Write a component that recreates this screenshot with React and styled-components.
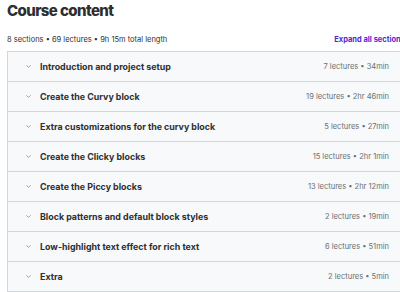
import React from 'react';
import styled, { createGlobalStyle } from 'styled-components';

const sections = [
  { title: 'Introduction and project setup', meta: '7 lectures • 34min' },
  { title: 'Create the Curvy block', meta: '19 lectures • 2hr 46min' },
  { title: 'Extra customizations for the curvy block', meta: '5 lectures • 27min' },
  { title: 'Create the Clicky blocks', meta: '15 lectures • 2hr 1min' },
  { title: 'Create the Piccy blocks', meta: '13 lectures • 2hr 12min' },
  { title: 'Block patterns and default block styles', meta: '2 lectures • 19min' },
  { title: 'Low-highlight text effect for rich text', meta: '6 lectures • 51min' },
  { title: 'Extra', meta: '2 lectures • 5min' },
];

const Chevron = () => (
  <svg width="5" height="3" viewBox="0 0 5 3" fill="none">
    <path d="M0.6 0.6 L2.5 2.4 L4.4 0.6" stroke="#8a8f93" strokeWidth="0.8" strokeLinecap="round" strokeLinejoin="round" />
  </svg>
);

const App = () => (
  <>
    <GlobalStyle />
    <Page>
      <Title>Course content</Title>
      <SummaryBar>
        <Summary>8 sections • 69 lectures • 9h 15m total length</Summary>
        <ExpandLink>Expand all sections</ExpandLink>
      </SummaryBar>
      <SectionList>
        {sections.map((s) => (
          <SectionRow key={s.title}>
            <ChevronBox><Chevron /></ChevronBox>
            <SectionTitle>{s.title}</SectionTitle>
            <SectionMeta>{s.meta}</SectionMeta>
          </SectionRow>
        ))}
      </SectionList>
    </Page>
  </>
);

export default App;

const GlobalStyle = createGlobalStyle`
  body {
    margin: 0;
    background: #ffffff;
    overflow: hidden;
    font-family: Inter, "Noto Sans", sans-serif;
    color: #2d2f31;
  }
`
const Page = styled.div`
  padding: 0 0 0 7px;
  width: 396px;
`
const Title = styled.h2`
  margin: 0;
  padding-top: 1px;
  font-size: 15px;
  line-height: 20px;
  font-weight: 800;
  letter-spacing: -0.6px;
`
const SummaryBar = styled.div`
  display: flex;
  justify-content: space-between;
  align-items: center;
  height: 14px;
  margin-top: 11px;
  margin-bottom: 5px;
  white-space: nowrap;
`
const Summary = styled.span`
  font-size: 7.5px;
  color: #2d2f31;
`
const ExpandLink = styled.span`
  font-size: 7.5px;
  font-weight: 700;
  color: #5624d0;
  margin-right: -2px;
`
const SectionList = styled.div`
  border: 1px solid #d1d7dc;
  border-bottom: none;
`
const SectionRow = styled.div`
  display: flex;
  align-items: center;
  height: 29px;
  border-bottom: 1px solid #d1d7dc;
  background: #f7f9fa;
  padding: 0 13px 0 18px;
`
const ChevronBox = styled.span`
  display: flex;
  width: 14px;
`
const SectionTitle = styled.span`
  flex: 1;
  font-size: 8.9px;
  font-weight: 700;
  color: #2d2f31;
`
const SectionMeta = styled.span`
  font-size: 7.5px;
  color: #6a6f73;
`
